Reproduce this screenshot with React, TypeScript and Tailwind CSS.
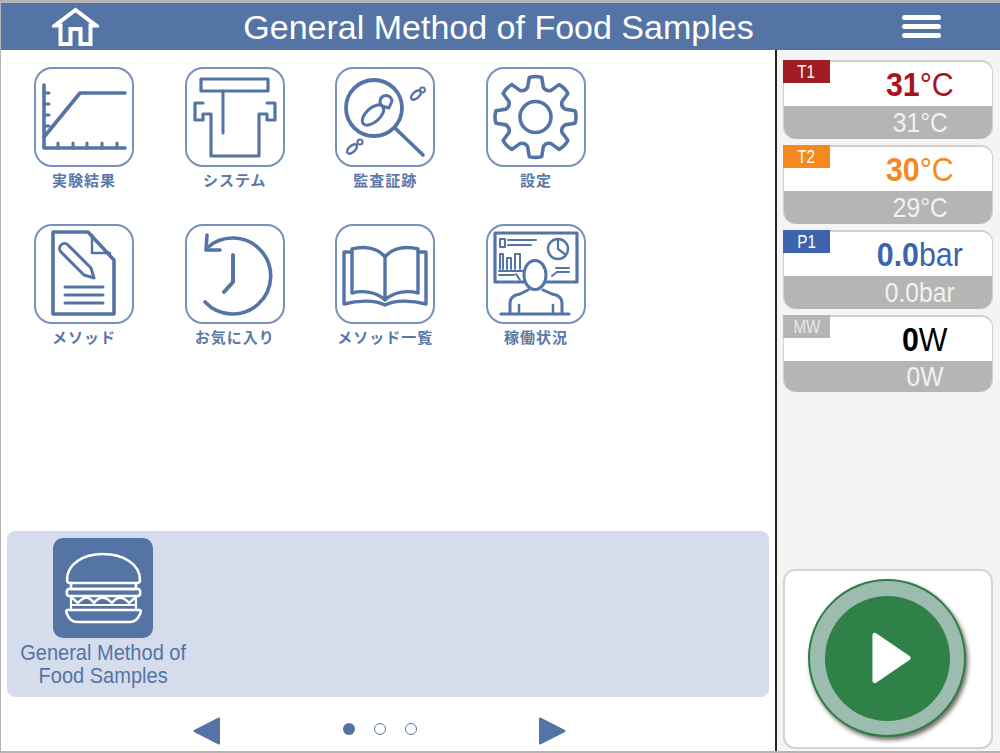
import React from "react";

const B = "#5574a6";

function gearPath() {
  const cx = 49.5, cy = 50, ro = 41, ri = 29.5;
  const pt = (r: number, deg: number) => {
    const a = (deg * Math.PI) / 180;
    return `${(cx + r * Math.cos(a)).toFixed(2)} ${(cy + r * Math.sin(a)).toFixed(2)}`;
  };
  let d = "";
  for (let i = 0; i < 8; i++) {
    const a = i * 45 - 90;
    d += `${i === 0 ? "M" : "L"}${pt(ri + 1, a - 15)} L${pt(ro - 1, a - 9)} Q${pt(ro + 0.5, a)} ${pt(ro - 1, a + 9)} L${pt(ri + 1, a + 15)} Q${pt(ri - 2, a + 22.5)} `;
    d += pt(ri + 1, a + 30) + " ";
  }
  return d + "Z";
}

function IconBox({ children }: { children: React.ReactNode }) {
  return (
    <div className="w-[100px] h-[100px] rounded-[18px] border-2 border-[#7890ba] bg-white">
      <svg viewBox="2 2 96 96" className="w-[96px] h-[96px]" fill="none" stroke={B} strokeWidth="3" strokeLinecap="round" strokeLinejoin="round">
        {children}
      </svg>
    </div>
  );
}

const icons: Record<string, React.ReactNode> = {
  chart: (
    <>
      <path d="M10 18V81H91" strokeWidth="3.6" />
      <path d="M10 70L46 26H91" strokeWidth="3.6" />
      <path d="M10 26H15M10 37H15M10 48H15M10 59H15M24 81V76M39 81V76M53 81V76M68 81V76M83 81V76" strokeWidth="3" />
    </>
  ),
  system: (
    <>
      <rect x="16" y="12" width="67" height="12" strokeWidth="3.2" />
      <path d="M38 24V66" />
      <path d="M18 36H10V53H18V47H26V89H74V47H82V53H90V36H82" strokeWidth="3.2" />
    </>
  ),
  audit: (
    <>
      <circle cx="39" cy="41" r="28" strokeWidth="3.8" />
      <path d="M60 61L88 88" strokeWidth="3.6" />
      <ellipse cx="38" cy="48" rx="13" ry="7" transform="rotate(-42 38 48)" strokeWidth="3" />
      <path d="M47 39a6 6 0 1 1 10 -5l-3 7z" strokeWidth="3" />
      <ellipse cx="81" cy="28" rx="6" ry="3.2" transform="rotate(-42 81 28)" strokeWidth="2.4" />
      <circle cx="87.5" cy="23" r="2.4" strokeWidth="2" />
      <ellipse cx="17" cy="82" rx="6" ry="3.2" transform="rotate(-42 17 82)" strokeWidth="2.4" />
      <circle cx="25" cy="75" r="2.6" strokeWidth="2" />
    </>
  ),
  gear: (
    <>
      <path d={gearPath()} strokeWidth="3.6" />
      <circle cx="49.5" cy="50" r="15.5" strokeWidth="3.6" />
    </>
  ),
  doc: (
    <>
      <path d="M19 8H54L80 36V90H19Z" strokeWidth="3.6" />
      <path d="M58 11V29H76" strokeWidth="2.4" />
      <path d="M60 54L50 51L27 28a4.5 4.5 0 0 1 7 -7L57 44Z" strokeWidth="3" />
      <path d="M31 63H69M31 71H69M31 79H69" />
    </>
  ),
  history: (
    <>
      <path d="M20 78A38 38 0 1 0 22 24" strokeWidth="3.6" />
      <path d="M22 11L21 26H35" strokeWidth="3.6" />
      <path d="M48 31V58L39 68" strokeWidth="4" />
    </>
  ),
  book: (
    <>
      <path d="M50 33C42 23 28 22 17 25V69C28 66 42 68 50 76C58 68 72 66 83 69V25C72 22 58 23 50 33V76" strokeWidth="3.4" />
      <path d="M17 28H9V80C24 76 40 76 50 81C60 76 76 76 91 80V28H83" strokeWidth="3.4" />
    </>
  ),
  board: (
    <>
      <path d="M38 58H9V9H91V58H60" strokeWidth="3.2" />
      <rect x="14" y="15" width="5" height="8" strokeWidth="2" />
      <path d="M22 16H50M22 21H45" strokeWidth="2" />
      <path d="M14 45V30H17V45M21 45V34H25V45M29 45V30H34V45" strokeWidth="2" />
      <path d="M13 47H37" strokeWidth="2" />
      <path d="M13 51H28M30 50L34 56M66 52L71 48H83M70 44H83" strokeWidth="2" />
      <circle cx="72" cy="25" r="10" strokeWidth="2.4" />
      <path d="M72 15V25L80 31" strokeWidth="2.2" />
      <ellipse cx="49" cy="51" rx="11" ry="14.5" strokeWidth="3" />
      <path d="M24 89V79C24 73 28 71 34 70L42 66M76 89V79C76 73 72 71 66 70L57 66" strokeWidth="3" />
      <path d="M33 89V81M67 89V81" strokeWidth="2.6" />
      <path d="M15 90H83" strokeWidth="3.2" />
    </>
  ),
};

const items = [
  ["chart", "実験結果"],
  ["system", "システム"],
  ["audit", "監査証跡"],
  ["gear", "設定"],
  ["doc", "メソッド"],
  ["history", "お気に入り"],
  ["book", "メソッド一覧"],
  ["board", "稼働状況"],
];

const cards = [
  { tag: "T1", tagBg: "bg-[#a11d24]", tagText: "text-white", color: "text-[#a8141f]", num: "31", unit: "°C", sub: "31°C", h: "h-[79px]", pad: "pl-[64px]" },
  { tag: "T2", tagBg: "bg-[#f5881f]", tagText: "text-white", color: "text-[#f5881f]", num: "30", unit: "°C", sub: "29°C", h: "h-[79px]", pad: "pl-[64px]" },
  { tag: "P1", tagBg: "bg-[#3d63ad]", tagText: "text-white", color: "text-[#3d63ad]", num: "0.0", unit: "bar", sub: "0.0bar", h: "h-[79px]", pad: "pl-[64px]" },
  { tag: "MW", tagBg: "bg-[#b5b5b5]", tagText: "text-[#e8e8e8]", color: "text-black", num: "0", unit: "W", sub: "0W", h: "h-[77px]", pad: "pl-[74px]" },
];

function Arrow({ dir }: { dir: "left" | "right" }) {
  return (
    <svg width="27" height="28" viewBox="0 0 27 28" fill={B} stroke={B} strokeWidth="2" strokeLinejoin="round" className="mt-[4px]">
      <path d={dir === "left" ? "M26 1.5V26.5L1.5 14Z" : "M1 1.5V26.5L25.5 14Z"} />
    </svg>
  );
}

export default function App() {
  return (
    <div className="w-[1000px] h-[753px] flex flex-col overflow-hidden border-t-[3px] border-l border-b-2 border-[#b4b4b4] bg-white font-['Liberation_Sans',sans-serif]">
      <header className="h-[47px] shrink-0 flex items-center bg-[#5574a6]">
        <div className="ml-[51px] w-[47px]">
          <svg width="47" height="40" viewBox="0 0 47 40" fill="none" stroke="white" strokeWidth="4" strokeLinejoin="miter">
            <path d="M23.5 3L3 18.5H8.5V37H18.5V22H28.5V37H38.5V18.5H44Z" />
          </svg>
        </div>
        <h1 className="flex-1 mr-[4px] text-center text-white text-[34px] leading-none font-normal">
          General Method of Food Samples
        </h1>
        <div className="w-[39px] mr-[59px] flex flex-col gap-[4.6px]">
          <span className="block h-[4.6px] rounded-full bg-white" />
          <span className="block h-[4.6px] rounded-full bg-white" />
          <span className="block h-[4.6px] rounded-full bg-white" />
        </div>
      </header>

      <div className="flex-1 flex min-h-0">
        <main className="w-[774px] shrink-0 flex flex-col">
          <div className="pt-[17px] pl-[33px] grid grid-cols-[repeat(4,100px)] gap-x-[50.7px] gap-y-[27px] font-['Noto_Sans_CJK_JP',sans-serif]">
            {items.map(([icon, label]) => (
              <div key={label} className="flex flex-col items-center">
                <IconBox>{icons[icon]}</IconBox>
                <span className="mt-[2px] mb-[1px] h-[27px] whitespace-nowrap text-[15px] leading-[22px] font-bold tracking-[1px] text-[#5a78a8]">
                  {label}
                </span>
              </div>
            ))}
          </div>

          <section className="mt-auto ml-[6px] mr-[6px] h-[166px] rounded-lg bg-[#d5dded] pt-[7px]">
            <div className="w-[192px] flex flex-col items-center">
              <div className="w-[100px] h-[100px] rounded-[10px] bg-[#5574a6]">
                <svg viewBox="0 0 100 100" className="w-[100px] h-[100px]" fill="none" stroke="white" strokeWidth="2.6" strokeLinejoin="round" strokeLinecap="round">
                  <path d="M14 42C14 26 30 16 50 16C70 16 87 26 87 42C87 44 86 45 84 45H17C15 45 14 44 14 42Z" />
                  <path d="M18 45V51H83V45" />
                  <path d="M16 51H85C88 51 88 58 85 58H16C13 58 13 51 16 51Z" />
                  <path d="M18 59L25 65C31 58 36 58 41 65C46 58 53 58 59 65C64 58 70 58 76 65L83 59" strokeWidth="2.4" />
                  <path d="M18 59V72M83 59V72M18 67H83" strokeWidth="2.2" />
                  <path d="M14 72H87C88 72 88 74 87 76C85 81 82 84 77 84H24C19 84 16 81 14 76C13 74 13 72 14 72Z" />
                </svg>
              </div>
              <p className="mt-[3px] text-center text-[#5574a6] text-[22px] leading-[23px] whitespace-nowrap scale-x-[.91]">
                <span className="block">General Method of</span>
                <span className="block">Food Samples</span>
              </p>
            </div>
          </section>

          <nav className="h-[54px] shrink-0 flex items-center pl-[192px] pt-[10px]">
            <Arrow dir="left" />
            <span className="ml-[123px] w-[12px] h-[12px] rounded-full bg-[#5574a6]" />
            <span className="ml-[19px] w-[12px] h-[12px] rounded-full border-[1.5px] border-[#5574a6]" />
            <span className="ml-[19px] w-[12px] h-[12px] rounded-full border-[1.5px] border-[#5574a6]" />
            <span className="ml-[122px] flex"><Arrow dir="right" /></span>
          </nav>
        </main>

        <aside className="flex-1 flex flex-col border-l-2 border-[#222] bg-[#f4f4f4] pl-[6px] pr-[7px] pt-[10px] pb-[2px]">
          <div className="flex flex-col gap-[6px]">
            {cards.map((c) => (
              <div key={c.tag} className={`${c.h} flex flex-col rounded-[12px] border-t-2 border-x border-[#cfcfcf] bg-white`}>
                <div className={`relative h-[44px] shrink-0 flex items-center justify-center rounded-t-[12px] bg-white ${c.pad}`}>
                  <span className={`absolute -left-px -top-[2px] w-[47px] h-[23px] flex justify-center items-center ${c.tagBg}`}>
                    <span className={`${c.tagText} text-[19px] leading-none scale-x-[.8]`}>{c.tag}</span>
                  </span>
                  <span className={`${c.color} text-[33px] leading-none scale-x-[.92] whitespace-nowrap mt-[1px]`}>
                    <b className="font-bold">{c.num}</b>{c.unit}
                  </span>
                </div>
                <div className={`flex-1 flex items-center justify-center rounded-b-[12px] bg-[#b5b5b5] ${c.pad}`}>
                  <span className="text-[#f2f2f2] text-[28px] leading-none scale-x-[.88] whitespace-nowrap">{c.sub}</span>
                </div>
              </div>
            ))}
          </div>

          <div className="mt-auto h-[180px] rounded-[12px] border-2 border-[#d4d4d4] bg-white flex items-center justify-center">
            <div className="w-[158px] h-[158px] -translate-x-[1px] -translate-y-[1px] rounded-full border-2 border-[#2f7d46] bg-[#9dbcb0] flex items-center justify-center shadow-[2px_3px_4px_rgba(40,30,20,0.65)]">
              <div className="w-[125px] h-[125px] rounded-full bg-[#2f8147] flex items-center justify-center">
                <svg width="40" height="54" viewBox="0 0 42 56" fill="white" stroke="white" strokeWidth="5" strokeLinejoin="round" className="ml-[7px]">
                  <path d="M4 4V52L39 28Z" />
                </svg>
              </div>
            </div>
          </div>
        </aside>
      </div>
    </div>
  );
}
